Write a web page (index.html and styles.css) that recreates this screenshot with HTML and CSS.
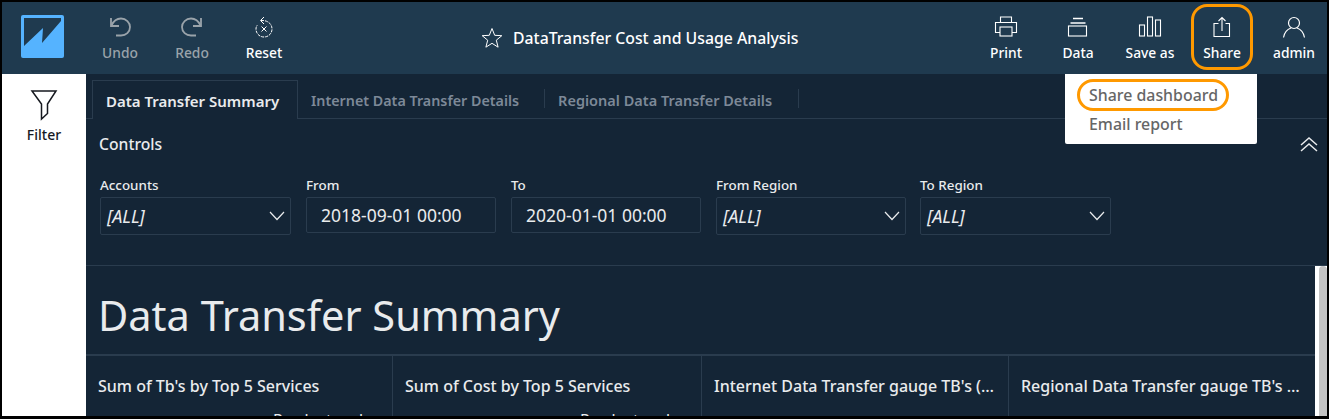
FILE: index.html
```html
<!DOCTYPE html>
<html lang="en">
<head>
<meta charset="utf-8">
<title>DataTransfer Cost and Usage Analysis</title>
<link rel="stylesheet" href="styles.css">
</head>
<body>
<div class="frame">
  <header class="topbar">
    <div class="logo-cell">
      <svg class="logo" width="43" height="43" viewBox="0 0 43 43"><rect width="43" height="43" rx="2" fill="#55b3ff"/><path d="M3 3H40V6L21 28L22 13L3 31Z" fill="#1f3a4f"/></svg>
    </div>
    <div class="tools left-tools">
      <div class="tool dim">
        <svg width="24" height="24" viewBox="0 0 24 24" fill="none" stroke="currentColor" stroke-width="1.800"><path d="M3 2V10H11"/><path d="M3.500 9.500C5.500 5 9 2.500 13 2.500C18 2.500 22 6.500 22 11C22 16 18 19.500 13 19.500H8"/></svg>
        <span>Undo</span>
      </div>
      <div class="tool dim">
        <svg width="24" height="24" viewBox="0 0 24 24" fill="none" stroke="currentColor" stroke-width="1.800"><path d="M21 2V10H13"/><path d="M20.500 9.500C18.500 5 15 2.500 11 2.500C6 2.500 2 6.500 2 11C2 16 6 19.500 11 19.500H16"/></svg>
        <span>Redo</span>
      </div>
      <div class="tool">
        <svg width="24" height="24" viewBox="0 0 24 24" fill="none" stroke="currentColor" stroke-width="1"><path d="M12 1L8.500 4.500L12 8"/><path d="M9 4.500C15 4 20 7.500 20 13C20 17.500 16.500 21 12 21C7.500 21 4 17.500 4 13C4 11.500 4.500 10 5.500 9" stroke-dasharray="3 1"/><path d="M9.500 10.500L14.500 15.500M14.500 10.500L9.500 15.500"/></svg>
        <span>Reset</span>
      </div>
    </div>
    <div class="doc-title">
      <svg width="22" height="22" viewBox="0 0 22 22" fill="none" stroke="#fff" stroke-width="1"><path d="M11 1.500L13.700 8.300L20.800 8.700L15.300 13.200L17.100 20.200L11 16.300L4.900 20.200L6.700 13.200L1.200 8.700L8.300 8.300Z"/></svg>
      <span>DataTransfer Cost and Usage Analysis</span>
    </div>
    <div class="tools right-tools">
      <div class="tool">
        <svg width="24" height="24" viewBox="0 0 24 24" fill="none" stroke="currentColor" stroke-width="1.100"><path d="M6.500 6.500V1H17.500V6.500"/><path d="M6 16.500H1.500V6.500H22.500V16.500H18"/><rect x="6" y="11" width="12" height="9"/></svg>
        <span>Print</span>
      </div>
      <div class="tool">
        <svg width="24" height="24" viewBox="0 0 24 24" fill="none" stroke="currentColor" stroke-width="1.100"><path d="M7 2.500H17" stroke-width="1.500"/><path d="M4.500 7H19.500" stroke-width="1.500"/><rect x="2.500" y="10" width="18" height="10"/></svg>
        <span>Data</span>
      </div>
      <div class="tool">
        <svg width="24" height="24" viewBox="0 0 24 24" fill="none" stroke="currentColor" stroke-width="1.100"><rect x="1.500" y="9" width="5" height="11"/><rect x="9.500" y="1" width="5" height="19"/><rect x="17.500" y="4" width="5" height="16"/></svg>
        <span>Save as</span>
      </div>
      <div class="tool">
        <svg width="24" height="24" viewBox="0 0 24 24" fill="none" stroke="currentColor" stroke-width="1.100"><path d="M8.500 7.500H4V20.500H19.500V7.500H15.500"/><path d="M12 15V1.500M8.500 5L12 1.500L15.500 5"/></svg>
        <span>Share</span>
      </div>
      <div class="tool">
        <svg width="24" height="24" viewBox="0 0 24 24" fill="none" stroke="currentColor" stroke-width="1.200"><circle cx="12" cy="7" r="5.500"/><path d="M1.500 21.500C2.500 16 6 13 9 12M22.500 21.500C21.500 16 18 13 15 12"/></svg>
        <span>admin</span>
      </div>
    </div>
  </header>
  <div class="main">
    <aside class="sidebar">
      <svg width="28" height="32" viewBox="0 0 28 32" fill="none" stroke="#16191f" stroke-width="1.500"><path d="M2 2H26L17.500 15V24.500L11.500 30V15Z"/></svg>
      <span>Filter</span>
    </aside>
    <section class="content">
      <nav class="tabs">
        <div class="tab active">Data Transfer Summary</div>
        <div class="tab">Internet Data Transfer Details</div>
        <div class="tab last">Regional Data Transfer Details</div>
      </nav>
      <div class="controls">
        <div class="controls-head">
          <span>Controls</span>
          <svg width="20" height="16" viewBox="0 0 20 16" fill="none" stroke="#e9ebed" stroke-width="1.500"><path d="M2 9L10 2L18 9M2 15L10 8L18 15"/></svg>
        </div>
        <div class="control-row">
          <div class="control first">
            <label>Accounts</label>
            <div class="select"><em>[ALL]</em><svg width="16" height="10" viewBox="0 0 16 10" fill="none" stroke="#e9ebed" stroke-width="1.200"><path d="M1 1L8 8.500L15 1"/></svg></div>
          </div>
          <div class="control">
            <label>From</label>
            <div class="date">2018-09-01 00:00</div>
          </div>
          <div class="control">
            <label>To</label>
            <div class="date">2020-01-01 00:00</div>
          </div>
          <div class="control">
            <label>From Region</label>
            <div class="select"><em>[ALL]</em><svg width="16" height="10" viewBox="0 0 16 10" fill="none" stroke="#e9ebed" stroke-width="1.200"><path d="M1 1L8 8.500L15 1"/></svg></div>
          </div>
          <div class="control">
            <label>To Region</label>
            <div class="select"><em>[ALL]</em><svg width="16" height="10" viewBox="0 0 16 10" fill="none" stroke="#e9ebed" stroke-width="1.200"><path d="M1 1L8 8.500L15 1"/></svg></div>
          </div>
        </div>
      </div>
      <div class="sheet">
        <div class="sheet-body">
          <h1>Data Transfer Summary</h1>
          <div class="cards">
            <div class="card"><h2>Sum of Tb's by Top 5 Services</h2><p>Product code</p></div>
            <div class="card"><h2>Sum of Cost by Top 5 Services</h2><p>Product code</p></div>
            <div class="card"><h2>Internet Data Transfer gauge TB's (…</h2></div>
            <div class="card"><h2>Regional Data Transfer gauge TB's …</h2></div>
          </div>
        </div>
        <div class="scrollbar"><div class="thumb"></div></div>
      </div>
    </section>
  </div>
  <div class="menu">
    <div>Share dashboard</div>
    <div>Email report</div>
  </div>
  <div class="ring ring-share"></div>
  <div class="ring ring-dash"></div>
</div>
</body>
</html>
```

FILE: styles.css
```css
* { box-sizing: border-box; }
html, body { margin: 0; padding: 0; background: #000; }
body { font-family: "Noto Sans", "Open Sans", sans-serif; overflow: hidden; }
.frame { position: relative; width: 1329px; height: 419px; border: 2px solid #000; border-bottom-width: 3px; display: flex; flex-direction: column; overflow: hidden; background: #142536; }
.topbar { height: 72px; flex: none; display: flex; align-items: stretch; background: #1f3a4f; color: #fff; position: relative; }
.logo-cell { width: 84px; display: flex; align-items: flex-start; padding: 13px 0 0 19px; }
.tools { display: flex; }
.left-tools { margin-left: -2px; }
.tool { width: 72px; display: flex; flex-direction: column; align-items: center; padding-top: 14px; font-size: 13.800px; font-weight: 500; color: #fff; }
.tool svg { display: block; height: 24px; margin-bottom: 4px; }
.tool span { line-height: 18px; }
.tool.dim { color: #9aa3aa; }
.doc-title { position: absolute; left: 479px; top: 25px; display: flex; align-items: center; gap: 10px; font-size: 15.800px; font-weight: 500; line-height: 22px; }
.right-tools { margin-left: auto; margin-right: -3px; }
.main { flex: 1; display: flex; min-height: 0; }
.sidebar { width: 84px; flex: none; background: #fff; display: flex; flex-direction: column; align-items: center; padding-top: 15px; font-size: 14px; font-weight: 500; color: #16191f; }
.sidebar svg { margin-bottom: 4px; }
.content { flex: 1; min-width: 0; display: flex; flex-direction: column; }
.tabs { height: 45px; flex: none; display: flex; align-items: flex-end; padding-left: 6px; border-bottom: 1px solid #2a3c4e; font-size: 14.300px; font-weight: 600; color: #7d8998; }
.tab { height: 38px; display: flex; align-items: center; padding: 2px 26px 0 13px; position: relative; white-space: nowrap; }
.tab.last { font-size: 14.500px; padding-right: 27px; }
.tab.active { color: #e9ebed; font-size: 15px; border: 1px solid #2a3c4e; border-bottom: 0; height: 39px; margin-bottom: -1px; background: #142536; width: 206px; padding-right: 0; }
.tab + .tab::after { content: ""; position: absolute; right: 0; top: 9px; height: 19px; width: 1px; background: #2a3c4e; }
.controls { height: 147px; flex: none; padding: 12px 0 0 13px; border-bottom: 1px solid #2a3c4e; color: #e9ebed; }
.controls-head { display: flex; justify-content: space-between; align-items: center; padding-right: 8px; font-size: 15.700px; font-weight: 500; height: 26px; }
.control-row { display: flex; gap: 15px; margin-top: 20px; padding-left: 1px; }
.control { width: 190px; }
.control.first { width: 191px; }
.control:last-child { width: 191px; margin-left: -1px; }
.control label { display: block; font-size: 13.400px; font-weight: 500; line-height: 17px; margin-bottom: 3px; }
.select, .date { height: 38px; border: 1px solid #2a3c4e; border-radius: 2px; display: flex; align-items: center; }
.select { justify-content: space-between; padding: 0 5px 0 6px; font-size: 18px; }
.select em { font-style: italic; }
.date { padding: 0 14px; height: 36px; margin-bottom: 2px; font-size: 17.500px; }
.sheet { flex: 1; min-height: 0; display: flex; }
.sheet-body { flex: 1; min-width: 0; display: flex; flex-direction: column; }
h1 { margin: 0; height: 88px; flex: none; padding: 22px 0 0 12px; font-size: 41.500px; font-weight: 400; line-height: 54px; color: #e9ebed; }
.cards { flex: 1; display: grid; grid-template-columns: 307px 309px 307px 1fr; border-top: 2px solid #2a3c4e; min-height: 0; overflow: hidden; }
.card { border-right: 1px solid #2a3c4e; padding: 20px 0 0 12px; overflow: hidden; color: #e9ebed; }
.card:last-child { border-right: 0; }
.card h2 { margin: 0; font-size: 16px; font-weight: 500; line-height: 20px; white-space: nowrap; }
.card p { margin: 16px 0 0; font-size: 16px; line-height: 16px; padding-left: 175px; white-space: nowrap; }
.scrollbar { width: 12px; flex: none; background: #fff; padding-left: 4px; }
.thumb { width: 100%; height: 100%; background: #c4c4c4; border-radius: 4px 4px 0 0; }
.menu { position: absolute; left: 1063px; top: 72px; width: 192px; height: 70px; background: #fff; border-radius: 0 0 2px 2px; padding: 7px 24px; font-size: 15.900px; font-weight: 500; line-height: 29px; color: #666; }
.ring { position: absolute; border: 3px solid #f90; pointer-events: none; }
.ring-share { left: 1189px; top: 2px; width: 62px; height: 66px; border-radius: 16px; }
.ring-dash { left: 1075px; top: 77px; width: 152px; height: 32px; border-radius: 16px; }
```
